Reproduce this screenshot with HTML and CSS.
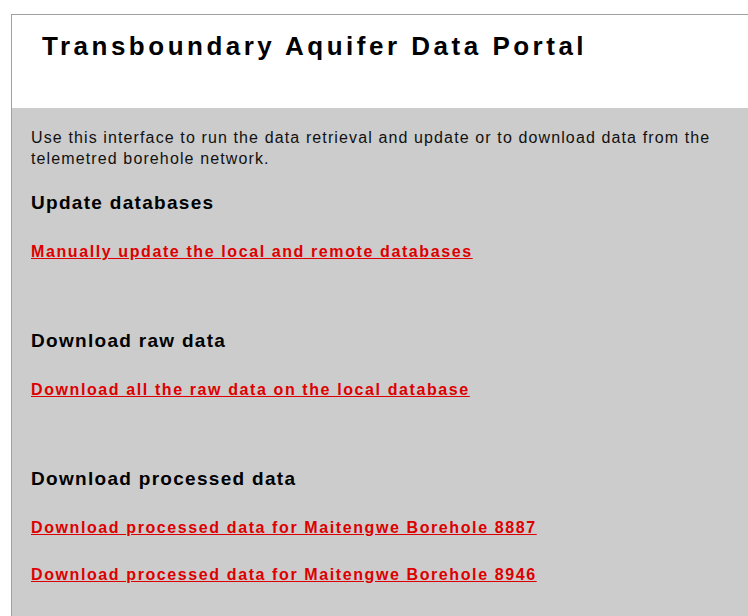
FILE: index.html
```html
<!DOCTYPE html>
<html lang="en">
<head>
<meta charset="utf-8">
<title>Transboundary Aquifer Data Portal</title>
<link rel="stylesheet" href="styles.css">
</head>
<body>
<div class="portal">
  <header class="masthead">
    <h1 class="title">Transboundary Aquifer Data Portal</h1>
  </header>
  <main class="content">
    <p class="intro">Use this interface to run the data retrieval and update or to download data from the telemetred borehole network.</p>

    <section class="block">
      <h2 class="block-title">Update databases</h2>
      <a class="action" href="#">Manually update the local and remote databases</a>
    </section>

    <section class="block">
      <h2 class="block-title">Download raw data</h2>
      <a class="action" href="#">Download all the raw data on the local database</a>
    </section>

    <section class="block">
      <h2 class="block-title">Download processed data</h2>
      <a class="action" href="#">Download processed data for Maitengwe Borehole 8887</a>
      <a class="action" href="#">Download processed data for Maitengwe Borehole 8946</a>
    </section>
  </main>
</div>
</body>
</html>
```

FILE: styles.css
```css
html, body {
  margin: 0;
  padding: 0;
  background: #ffffff;
}

body {
  font-family: "Liberation Sans", Arial, sans-serif;
  color: #000;
  padding: 14px 0 0 11px;
  height: 616px;
  box-sizing: border-box;
  overflow: hidden;
}

.portal {
  border-top: 1px solid #a0a0a0;
  border-left: 1px solid #a0a0a0;
  height: 100%;
  background: #cccccc;
}

.masthead {
  background: #ffffff;
  height: 93px;
  padding: 0 0 0 30px;
  box-sizing: border-box;
}

.title {
  margin: 0;
  padding-top: 16px;
  font-size: 26px;
  font-weight: bold;
  letter-spacing: 3.5px;
  line-height: 30px;
}

.content {
  padding: 19px 19px 0 19px;
  font-size: 16px;
}

.intro {
  margin: 0 0 23px 0;
  line-height: 21px;
  letter-spacing: 1.12px;
  color: #111;
}

.block {
  display: flex;
  flex-direction: column;
  align-items: flex-start;
  gap: 28px;
  margin-bottom: 69px;
}

.block-title {
  margin: 0;
  font-size: 19px;
  font-weight: bold;
  line-height: 22px;
  letter-spacing: 1.3px;
}

.action {
  color: #dd0000;
  font-weight: bold;
  font-size: 16px;
  line-height: 19px;
  letter-spacing: 1.6px;
  text-decoration: underline;
}
```
